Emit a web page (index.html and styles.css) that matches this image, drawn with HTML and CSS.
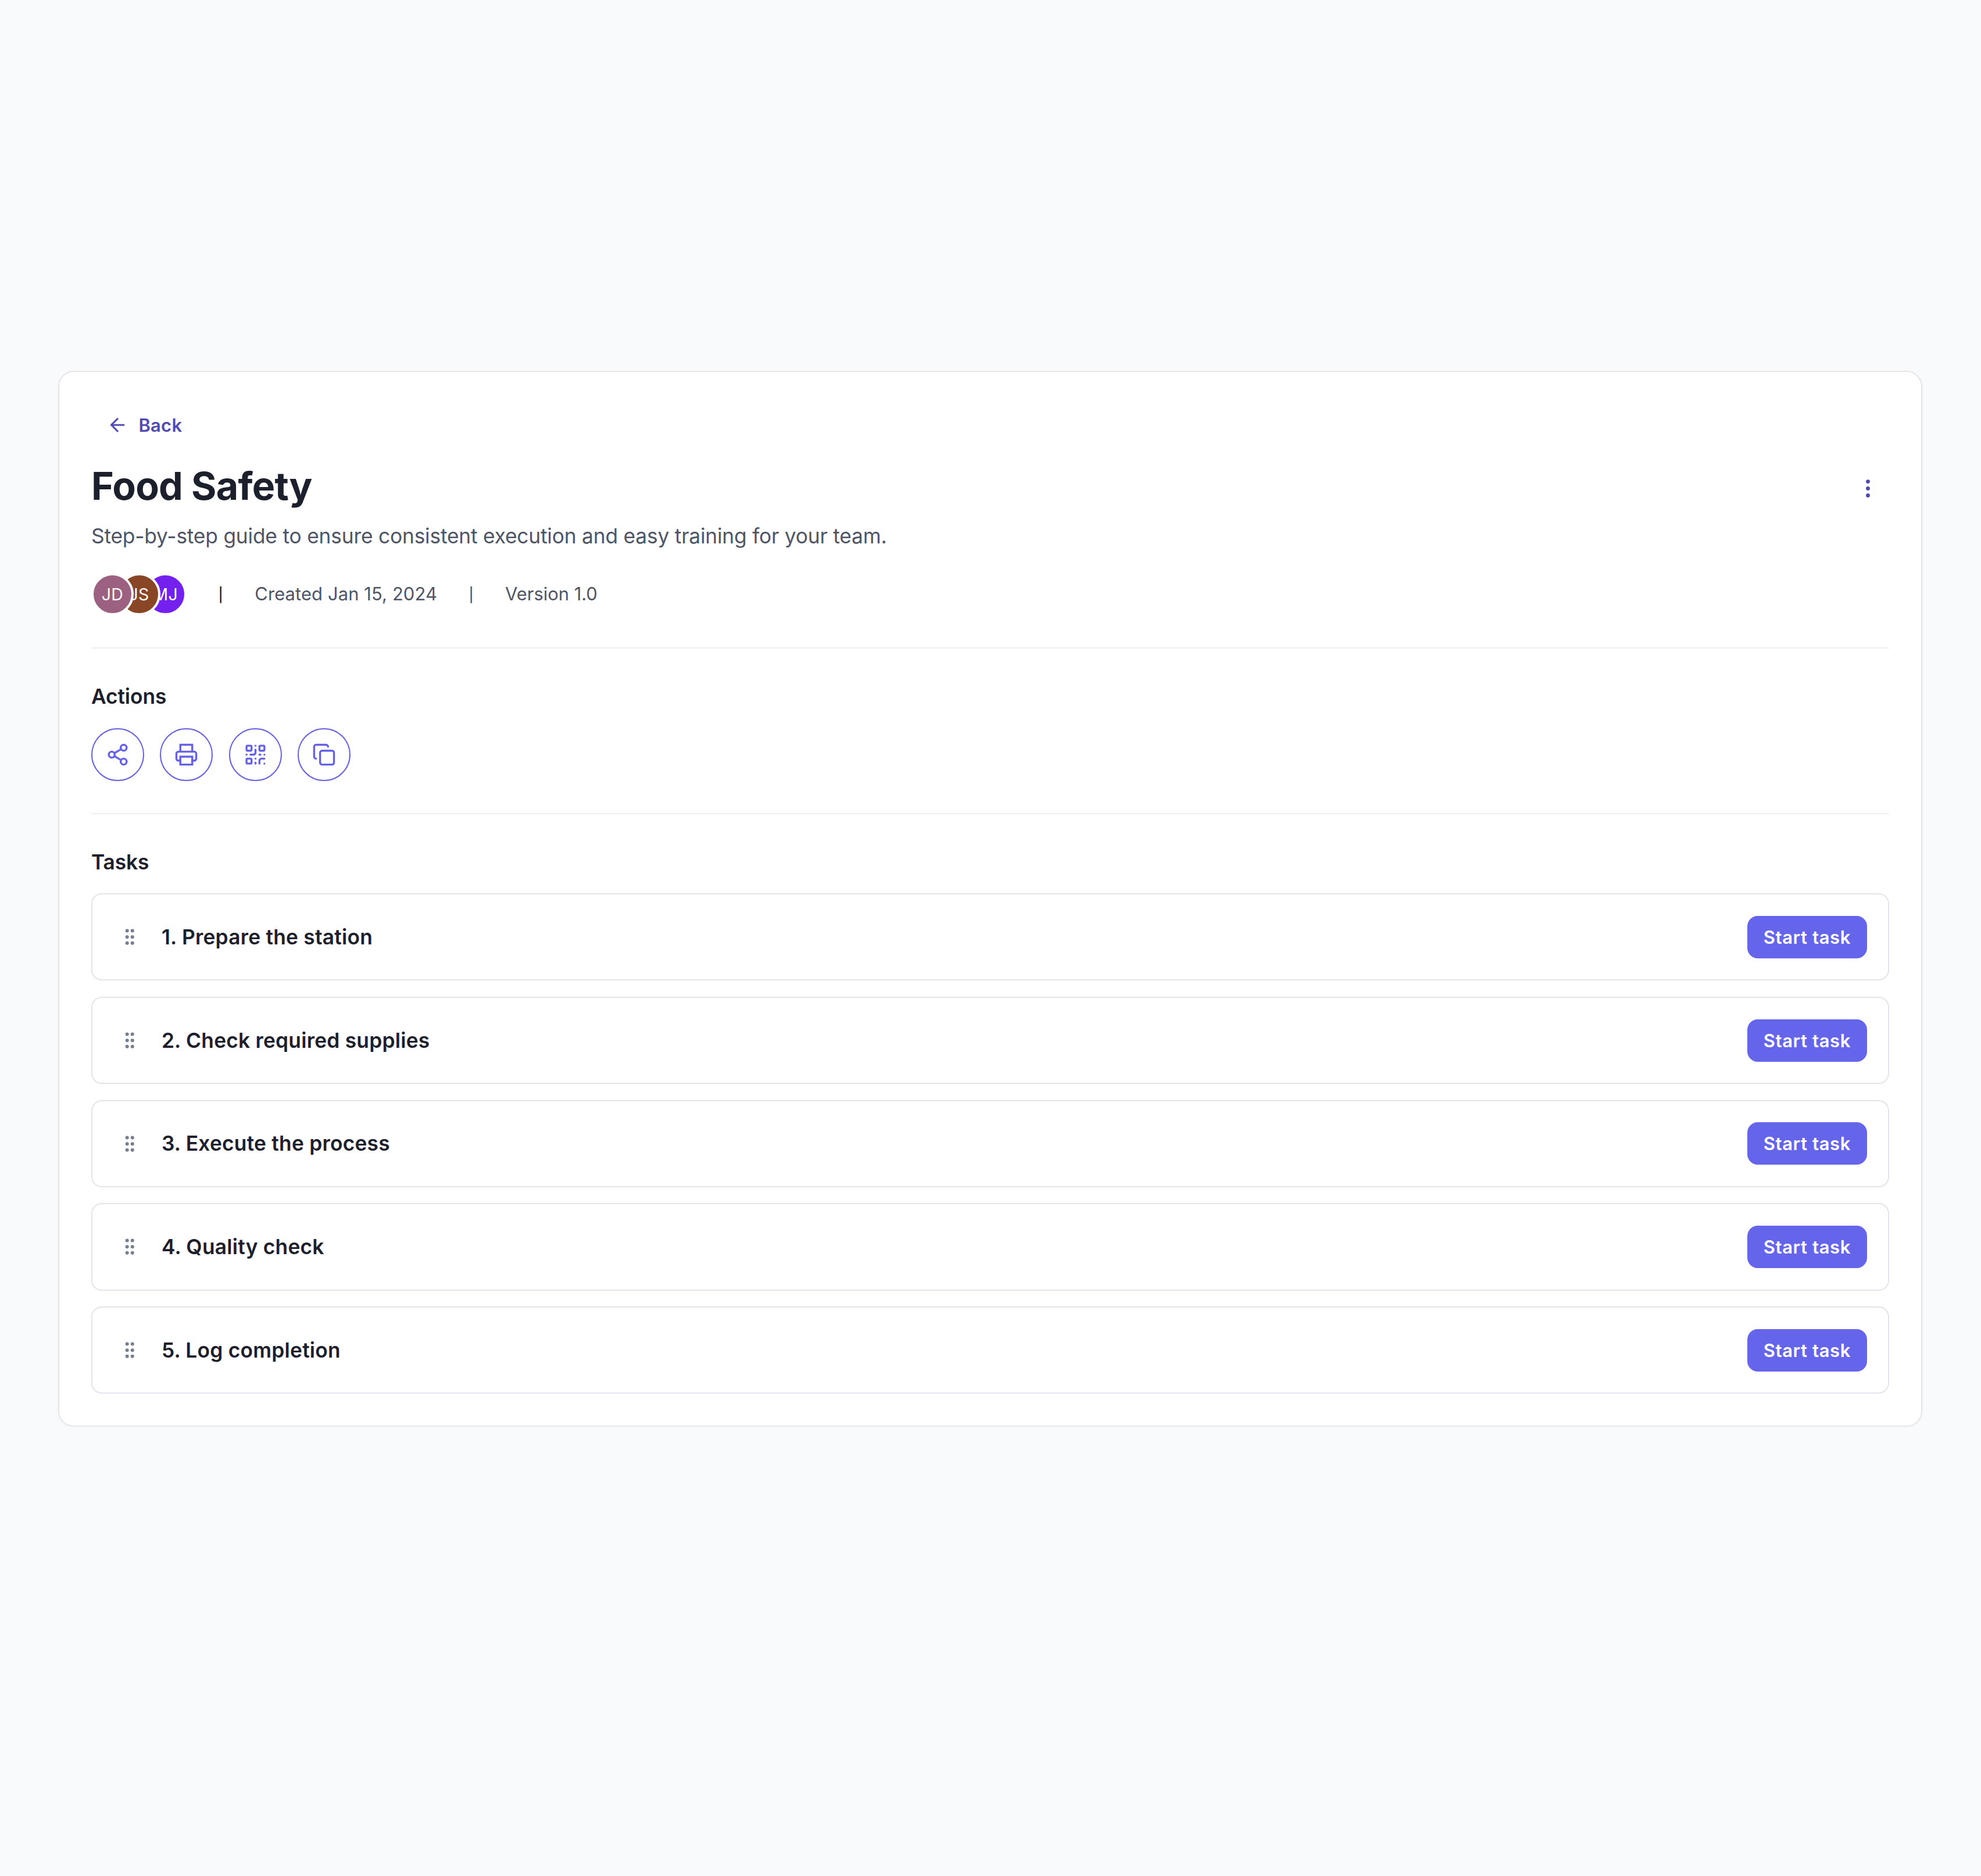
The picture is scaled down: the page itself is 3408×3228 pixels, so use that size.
FILE: index.html
```html
<!DOCTYPE html>
<html lang="en">

<head>
  <meta charset="UTF-8">
  <meta name="viewport" content="width=device-width, initial-scale=1.0">
  <title>Food Safety</title>
  <link rel="stylesheet" href="styles.css">
</head>

<body>
  <!-- shared icons -->
  <svg class="sprite" xmlns="http://www.w3.org/2000/svg">
    <symbol id="grip" viewBox="0 0 24 24">
      <circle cx="9" cy="12" r="1" /><circle cx="9" cy="5" r="1" /><circle cx="9" cy="19" r="1" />
      <circle cx="15" cy="12" r="1" /><circle cx="15" cy="5" r="1" /><circle cx="15" cy="19" r="1" />
    </symbol>
  </svg>

  <main class="card">
    <button class="back">
      <svg class="icon" viewBox="0 0 24 24"><path d="M19 12H5" /><path d="m12 19-7-7 7-7" /></svg>
      Back
    </button>

    <header class="header">
      <h1>Food Safety</h1>
      <button class="menu" aria-label="Options">
        <svg class="icon" viewBox="0 0 24 24"><circle cx="12" cy="12" r="1" /><circle cx="12" cy="5" r="1" /><circle cx="12" cy="19" r="1" /></svg>
      </button>
    </header>
    <p class="description">Step-by-step guide to ensure consistent execution and easy training for your team.</p>

    <div class="meta">
      <div class="avatars">
        <span class="avatar jd">JD</span>
        <span class="avatar js">JS</span>
        <span class="avatar mj">MJ</span>
      </div>
      <span class="separator dark">|</span>
      <span class="created">Created Jan 15, 2024</span>
      <span class="separator">|</span>
      <span class="version">Version 1.0</span>
    </div>

    <section class="section">
      <h2>Actions</h2>
      <div class="actions">
        <button class="action" aria-label="Share">
          <svg class="icon" viewBox="0 0 24 24"><circle cx="18" cy="5" r="3" /><circle cx="6" cy="12" r="3" /><circle cx="18" cy="19" r="3" /><path d="M8.59 13.51l6.83 3.98M15.41 6.51l-6.82 3.98" /></svg>
        </button>
        <button class="action" aria-label="Print">
          <svg class="icon" viewBox="0 0 24 24"><path class="sharp" d="M6 9V2h12v7" /><path d="M6 18H4a2 2 0 0 1-2-2v-5a2 2 0 0 1 2-2h16a2 2 0 0 1 2 2v5a2 2 0 0 1-2 2h-2" /><path class="sharp" d="M6 14h12v8H6z" /></svg>
        </button>
        <button class="action" aria-label="QR code">
          <svg class="icon" viewBox="0 0 24 24"><rect width="5" height="5" x="3" y="3" rx="1" /><rect width="5" height="5" x="16" y="3" rx="1" /><rect width="5" height="5" x="3" y="16" rx="1" /><path d="M21 16h-3a2 2 0 0 0-2 2v3" /><path d="M21 21v.01" /><path d="M12 7v3a2 2 0 0 1-2 2H7" /><path d="M3 12h.01" /><path d="M12 3h.01" /><path d="M12 16v.01" /><path d="M16 12h1" /><path d="M21 12v.01" /><path d="M12 21v-1" /></svg>
        </button>
        <button class="action" aria-label="Duplicate">
          <svg class="icon" viewBox="0 0 24 24"><rect width="14" height="14" x="8" y="8" rx="2" /><path d="M4 16c-1.1 0-2-.9-2-2V4c0-1.1.9-2 2-2h10c1.1 0 2 .9 2 2" /></svg>
        </button>
      </div>
    </section>

    <section class="section">
      <h2>Tasks</h2>
      <ul class="tasks">
        <li class="task">
          <svg class="icon grip"><use href="#grip" /></svg>
          <span class="name">1. Prepare the station</span>
          <button class="start">Start task</button>
        </li>
        <li class="task">
          <svg class="icon grip"><use href="#grip" /></svg>
          <span class="name">2. Check required supplies</span>
          <button class="start">Start task</button>
        </li>
        <li class="task">
          <svg class="icon grip"><use href="#grip" /></svg>
          <span class="name">3. Execute the process</span>
          <button class="start">Start task</button>
        </li>
        <li class="task">
          <svg class="icon grip"><use href="#grip" /></svg>
          <span class="name">4. Quality check</span>
          <button class="start">Start task</button>
        </li>
        <li class="task">
          <svg class="icon grip"><use href="#grip" /></svg>
          <span class="name">5. Log completion</span>
          <button class="start">Start task</button>
        </li>
      </ul>
    </section>
  </main>
</body>

</html>
```

FILE: styles.css
```css
* {
  box-sizing: border-box;
  margin: 0;
  padding: 0;
}

body {
  padding: 638px 101px 0 100px;
  background-color: #f8fafc;
  color: #1b202c;
  font-family: Inter, "Liberation Sans", sans-serif;
  font-size: 35.3px;
  line-height: 54.6px;
}

button {
  display: flex;
  align-items: center;
  justify-content: center;
  border: none;
  background: none;
  font-family: inherit;
  cursor: pointer;
}

.sprite {
  display: none;
}

.icon {
  width: 41px;
  height: 41px;
  fill: none;
  stroke: currentColor;
  stroke-width: 2;
  stroke-linecap: round;
  stroke-linejoin: round;
}

.sharp {
  stroke-linejoin: miter;
}

.card {
  padding: 55px 55px 54.4px;
  background-color: #fff;
  border: 2px solid #e4e6eb;
  border-radius: 27px;
  box-shadow: 0 2px 5px rgba(0, 0, 0, .03);
}

.back {
  gap: 18px;
  height: 73px;
  padding: 0 27px;
  color: #514bb3;
  font-size: 30.9px;
  font-weight: 600;
  letter-spacing: .3px;
}

.back .icon {
  width: 36.4px;
  height: 36.4px;
}

.header {
  display: flex;
  align-items: flex-end;
  justify-content: space-between;
  margin-top: 27px;
}

h1 {
  font-size: 66.3px;
  font-weight: 700;
  line-height: 82px;
  letter-spacing: -.74px;
}

.menu {
  width: 73px;
  height: 73px;
  color: #504aae;
}

.description {
  margin-top: 19.4px;
  color: #4d5566;
  letter-spacing: -.187px;
}

.meta {
  display: flex;
  align-items: center;
  margin-top: 35px;
  padding-bottom: 55px;
  border-bottom: 2px solid #efeff1;
  color: #4d5566;
  font-size: 30.9px;
}

.avatars {
  display: flex;
}

.avatar {
  position: relative;
  width: 73px;
  height: 73px;
  border: 4.5px solid #fff;
  border-radius: 50%;
  color: #fff;
  font-size: 28.4px;
  line-height: 65px;
  letter-spacing: .4px;
  text-align: center;
}

.avatar + .avatar {
  margin-left: -27.4px;
}

.jd {
  z-index: 3;
  background-color: #9c6180;
}

.js {
  z-index: 2;
  background-color: #884627;
}

.mj {
  z-index: 1;
  background-color: #7420ee;
}

.separator {
  width: 117px;
  padding-top: 3px;
  font-size: 24px;
  font-weight: 500;
  text-align: center;
}

.dark {
  color: #1b202c;
}

.created {
  letter-spacing: .12px;
}

.version {
  letter-spacing: 0;
}

.section {
  padding-top: 56px;
}

.section + .section {
  margin-top: 55px;
  border-top: 2px solid #efeff1;
}

h2 {
  font-size: 35.3px;
  font-weight: 600;
  letter-spacing: -.1px;
}

.actions {
  display: flex;
  gap: 27.4px;
  margin-top: 26px;
}

.action {
  width: 91px;
  height: 91px;
  border: 2px solid #6763e0;
  border-radius: 50%;
  color: #6562e6;
}

.tasks {
  display: flex;
  flex-direction: column;
  gap: 27.4px;
  margin-top: 26px;
  list-style: none;
}

.task {
  display: flex;
  align-items: center;
  height: 150.3px;
  padding: 0 36.4px 0 45.5px;
  border: 2px solid #e4e5ec;
  border-radius: 18px;
}

.grip {
  width: 36.4px;
  height: 36.4px;
  color: #757f90;
}

.name {
  margin-left: 37px;
  padding-top: 2px;
  font-weight: 600;
  letter-spacing: .24px;
}

.start {
  width: 205.5px;
  height: 73px;
  margin-left: auto;
  background-color: #6565eb;
  border-radius: 18px;
  color: #fff;
  font-size: 30.9px;
  font-weight: 600;
  letter-spacing: .64px;
}
```
